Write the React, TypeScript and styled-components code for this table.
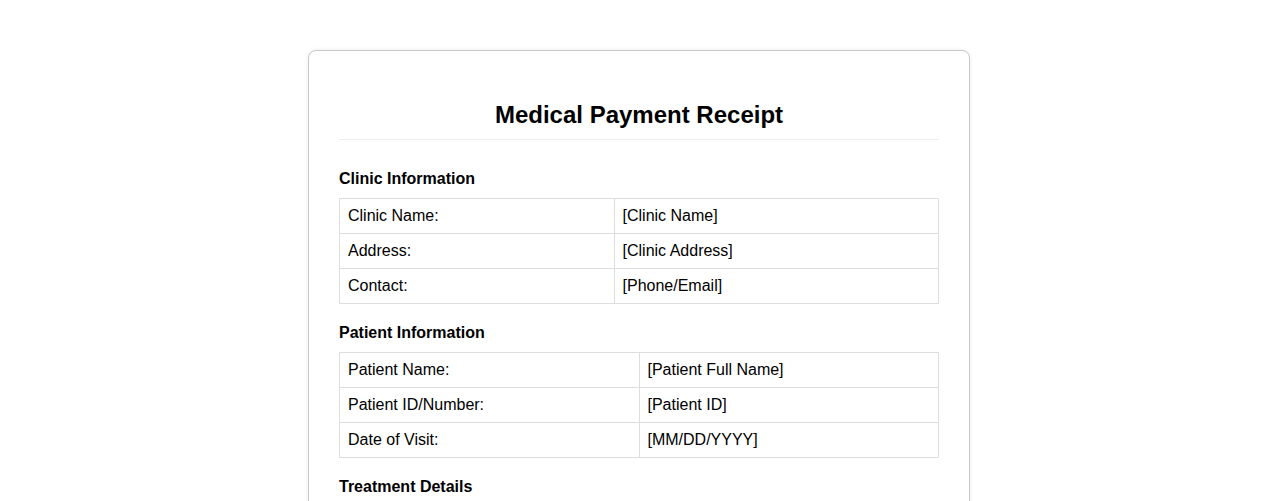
import React from "react";
import styled, { createGlobalStyle } from "styled-components";

const GlobalStyle = createGlobalStyle`
  html, body {
    margin: 0;
    padding: 0;
    background: #ffffff;
  }
  body {
    font-family: "Liberation Sans", Arial, sans-serif;
    color: #000;
  }
`;

const Card = styled.div`
  max-width: 600px;
  margin: 50px auto;
  padding: 30px;
  border: 1px solid #c8c8c8;
  border-radius: 8px;
  box-shadow: 0 0 4px rgba(0, 0, 0, 0.08);
  background: #fff;
`;

const Header = styled.header`
  text-align: center;
  padding-bottom: 10px;
  border-bottom: 1px solid #eee;
  margin-bottom: 30px;
`;

const Title = styled.h1`
  margin: 20px 0 0;
  font-size: 24px;
  font-weight: bold;
`;

const Section = styled.section`
  margin-bottom: 20px;
`;

const SectionTitle = styled.h3`
  margin: 0 0 10px;
  font-size: 16px;
  font-weight: bold;
`;

const Table = styled.table`
  width: 100%;
  border-collapse: collapse;
  font-size: 16px;
`;

const Cell = styled.td`
  border: 1px solid #ddd;
  padding: 8px;
  text-align: left;
`;

type Row = [string, string];

const sections: { title: string; rows: Row[] }[] = [
  {
    title: "Clinic Information",
    rows: [
      ["Clinic Name:", "[Clinic Name]"],
      ["Address:", "[Clinic Address]"],
      ["Contact:", "[Phone/Email]"],
    ],
  },
  {
    title: "Patient Information",
    rows: [
      ["Patient Name:", "[Patient Full Name]"],
      ["Patient ID/Number:", "[Patient ID]"],
      ["Date of Visit:", "[MM/DD/YYYY]"],
    ],
  },
  {
    title: "Treatment Details",
    rows: [
      ["Service Description:", "[Description]"],
      ["Amount:", "[$0.00]"],
    ],
  },
];

export default function App() {
  return (
    <>
      <GlobalStyle />
      <Card>
        <Header>
          <Title>Medical Payment Receipt</Title>
        </Header>
        {sections.map((s) => (
          <Section key={s.title}>
            <SectionTitle>{s.title}</SectionTitle>
            <Table>
              <tbody>
                {s.rows.map(([k, v]) => (
                  <tr key={k}>
                    <Cell>{k}</Cell>
                    <Cell>{v}</Cell>
                  </tr>
                ))}
              </tbody>
            </Table>
          </Section>
        ))}
      </Card>
    </>
  );
}
